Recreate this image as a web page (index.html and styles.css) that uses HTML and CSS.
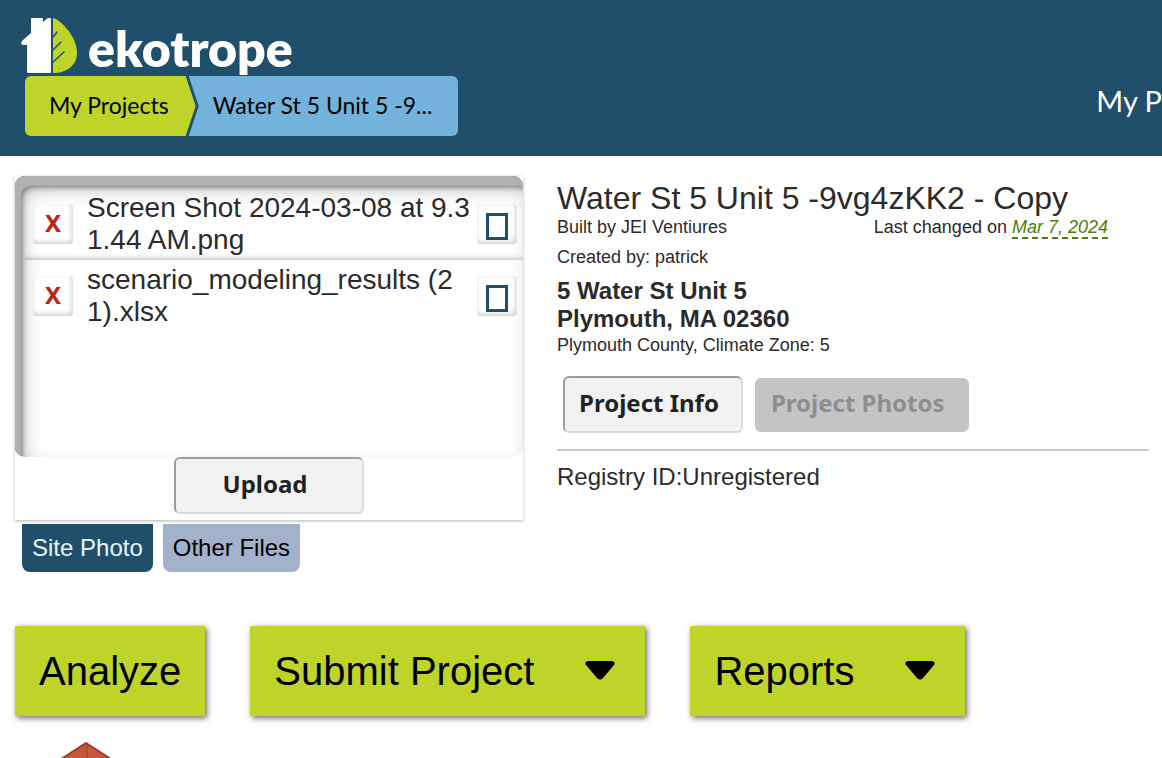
FILE: index.html
```
<!DOCTYPE html>
<html lang="en">

<head>
    <meta charset="UTF-8">
    <meta name="viewport" content="width=device-width, initial-scale=1.0">
    <title>Water St 5 Unit 5 | Ekotrope</title>
    <link rel="stylesheet" href="styles.css">
</head>

<body>
    <header class="header">
        <div class="header-left">
            <a class="logo" href="#">
                <svg class="logo-mark" width="58" height="56" viewBox="0 0 58 56">
                    <path fill="#fff" d="M12 0h10q1 0 1 1v3l5-4h2q1 0 1 1v53q0 1-1 1H8q-1 0-1-1V27H3q-3-1-1-4l9-8V1q0-1 1-1z" />
                    <path fill="#bfd428" d="M33 0c4 0 24 16 24 35 0 12-10 20-24 20z" />
                    <path fill="none" stroke="#204f6b" stroke-width="1.500" stroke-linecap="round"
                        d="M33 19l4-5M33 32l8-8M33 44l11-10" />
                </svg>
                <span class="logo-text">ekotrope</span>
            </a>
            <nav class="breadcrumb">
                <a class="crumb crumb-root" href="#">My Projects</a>
                <a class="crumb crumb-current" href="#">Water St 5 Unit 5 -9...</a>
            </nav>
        </div>
        <a class="header-link" href="#">My P</a>
    </header>

    <main class="main">
        <div class="project">
            <section class="files">
                <div class="files-card">
                    <ul class="file-list">
                        <li class="file">
                            <button class="file-button delete" type="button">X</button>
                            <span class="file-name">Screen Shot 2024-03-08 at 9.31.44 AM.png</span>
                            <button class="file-button" type="button" aria-label="Download">
                                <svg width="22" height="27" viewBox="0 0 22 27">
                                    <rect x="1.500" y="1.500" width="19" height="24" fill="none" stroke="#204f6b" stroke-width="3" />
                                </svg>
                            </button>
                        </li>
                        <li class="file">
                            <button class="file-button delete" type="button">X</button>
                            <span class="file-name">scenario_modeling_results (21).xlsx</span>
                            <button class="file-button" type="button" aria-label="Download">
                                <svg width="22" height="27" viewBox="0 0 22 27">
                                    <rect x="1.500" y="1.500" width="19" height="24" fill="none" stroke="#204f6b" stroke-width="3" />
                                </svg>
                            </button>
                        </li>
                    </ul>
                    <div class="upload">
                        <button class="button upload-button" type="button">Upload</button>
                    </div>
                </div>
                <div class="tabs">
                    <button class="tab active" type="button">Site Photo</button>
                    <button class="tab" type="button">Other Files</button>
                </div>
            </section>

            <section class="info">
                <h1 class="title">Water St 5 Unit 5 -9vg4zKK2 - Copy</h1>
                <div class="meta">
                    <span>Built by JEI Ventiures</span>
                    <span>Last changed on <a class="date" href="#">Mar 7, 2024</a></span>
                </div>
                <p class="created">Created by: patrick</p>
                <address class="address">5 Water St Unit 5<br>Plymouth, MA 02360</address>
                <p class="county">Plymouth County, Climate Zone: 5</p>
                <div class="info-buttons">
                    <button class="button" type="button">Project Info</button>
                    <button class="button" type="button" disabled>Project Photos</button>
                </div>
                <p class="registry">Registry ID:Unregistered</p>
            </section>
        </div>

        <div class="actions">
            <button class="action" type="button">Analyze</button>
            <button class="action" type="button">Submit Project
                <svg class="arrow" width="30" height="20" viewBox="0 0 30 20">
                    <path d="M3 0h24q4 1 2 4L18 17q-3 3-6 0L1 4q-2-3 2-4z" />
                </svg>
            </button>
            <button class="action" type="button">Reports
                <svg class="arrow" width="30" height="20" viewBox="0 0 30 20">
                    <path d="M3 0h24q4 1 2 4L18 17q-3 3-6 0L1 4q-2-3 2-4z" />
                </svg>
            </button>
        </div>

        <svg class="house" width="100" height="16" viewBox="0 0 100 16">
            <path fill="#c9583b" stroke="#98412d" stroke-width="2" d="M50 1 98 32v28H2V32z" />
            <path fill="none" stroke="#98412d" stroke-width="1" d="M51 1v40" />
        </svg>
    </main>
</body>

</html>
```
FILE: styles.css
```
* {
    box-sizing: border-box;
}

body {
    margin: 0;
    background-color: #fff;
    color: #2b2b2b;
    font-family: "Liberation Sans", Arial, sans-serif;
}

h1,
p {
    margin: 0;
    font-weight: normal;
}

button {
    font-family: inherit;
    cursor: pointer;
}

/* Header */
.header {
    display: flex;
    justify-content: space-between;
    align-items: flex-end;
    height: 156px;
    padding: 16px 0 20px 20px;
    background-color: #204f6b;
    font-family: Lato, sans-serif;
}

.logo {
    display: flex;
    height: 60px;
    color: #fff;
    text-decoration: none;
}

.logo-mark {
    margin-top: 2px;
}

.logo-text {
    margin-left: 10px;
    font-size: 50px;
    font-weight: 800;
    line-height: 64px;
}

.breadcrumb {
    display: flex;
    margin-left: 5px;
}

.crumb {
    height: 60px;
    color: #000;
    font-size: 23px;
    line-height: 58px;
    text-decoration: none;
}

.crumb-root {
    padding: 0 27px 0 24px;
    border-radius: 6px 0 0 6px;
    background-color: #bfd428;
    clip-path: polygon(0 0, calc(100% - 10px) 0, 100% 50%, calc(100% - 10px) 100%, 0 100%);
}

.crumb-current {
    margin-left: -7px;
    padding: 0 26px 0 24px;
    border-radius: 0 6px 6px 0;
    background-color: #73b2db;
    clip-path: polygon(0 0, 100% 0, 100% 100%, 0 100%, 10px 50%);
}

.header-link {
    padding-bottom: 16px;
    color: #fff;
    font-size: 29px;
    line-height: 38px;
    text-decoration: none;
}

/* Project */
.main {
    padding: 20px 13px 0 15px;
}

.project {
    display: grid;
    grid-template-columns: 508px 1fr;
    gap: 34px;
}

.files-card {
    box-shadow: 0 1px 3px rgba(0, 0, 0, 0.3);
}

.file-list {
    height: 281px;
    margin: 0;
    padding: 12px 0 0 10px;
    list-style: none;
    border-radius: 10px;
    box-shadow: inset 6px 10px 1px #b0b0b0, inset 8px 12px 6px -2px #555, inset 8px 12px 20px #bbb;
}

.file {
    display: flex;
    align-items: center;
    height: 72px;
    padding: 0 6px 0 8px;
    box-shadow: inset 0 -6px 6px -6px #999;
}

.file:last-child {
    box-shadow: none;
}

.file-button {
    display: flex;
    flex-shrink: 0;
    align-items: center;
    justify-content: center;
    width: 40px;
    height: 40px;
    padding: 4px 0 0;
    border: 0;
    border-radius: 4px;
    background-color: #fff;
    box-shadow: inset -1px -2px 5px #ccc;
}

.delete {
    padding: 0 0 4px;
    color: #bd2411;
    font-family: "Noto Sans", sans-serif;
    font-size: 24px;
    font-weight: bold;
}

.file-name {
    flex: 1;
    margin: 0 6px 0 14px;
    font-size: 28px;
    line-height: 32px;
    word-break: break-all;
}

.upload {
    display: flex;
    justify-content: center;
    height: 63px;
}

.button {
    height: 57px;
    padding: 0 22px 4px 14px;
    border: 2px solid;
    border-color: #9d9d9d #dadada #dadada #9d9d9d;
    border-radius: 6px;
    background-color: #f2f2f2;
    color: #222;
    font-family: "Noto Sans", sans-serif;
    font-size: 24px;
    font-weight: bold;
}

.button:disabled {
    height: 54px;
    border-color: #c4c4c4;
    background-color: #c4c4c4;
    color: #8e8e8e;
}

.upload-button {
    width: 190px;
}

.tabs {
    display: flex;
    gap: 10px;
    padding: 4px 7px 0;
}

.tab {
    height: 48px;
    padding: 0 10px;
    border: 0;
    border-radius: 0 0 8px 8px;
    background-color: #a3b2ca;
    color: #000;
    font-size: 24px;
}

.tab.active {
    background-color: #204f6b;
    color: #e8f6ff;
}

.info {
    font-size: 18px;
    line-height: 20px;
}

.title {
    padding-top: 4px;
    font-size: 32px;
    line-height: 37px;
}

.meta {
    display: flex;
    justify-content: space-between;
    padding-right: 41px;
}

.date {
    color: #4d8005;
    font-style: italic;
    text-decoration: none;
    border-bottom: 2px dashed #4d8005;
}

.created {
    margin-top: 10px;
}

.address {
    margin-top: 10px;
    font-size: 24px;
    font-style: normal;
    font-weight: bold;
    line-height: 28px;
}

.county {
    margin-top: 2px;
}

.info-buttons {
    display: flex;
    align-items: center;
    gap: 12px;
    margin-top: 21px;
    padding: 0 6px 16px;
    border-bottom: 2px solid #c8c8c8;
}

.registry {
    margin-top: 12px;
    font-size: 24px;
    line-height: 28px;
}

/* Actions */
.actions {
    display: flex;
    gap: 45px;
    margin-top: 54px;
}

.action {
    display: flex;
    align-items: center;
    gap: 51px;
    height: 90px;
    padding: 0 24px;
    border: 0;
    background-color: #bfd428;
    box-shadow: 2px 2px 6px rgba(0, 0, 0, 0.6);
    color: #000;
    font-size: 40px;
}

.arrow {
    margin-right: 6px;
}

.house {
    display: block;
    margin: 26px 0 0 21px;
}
```
